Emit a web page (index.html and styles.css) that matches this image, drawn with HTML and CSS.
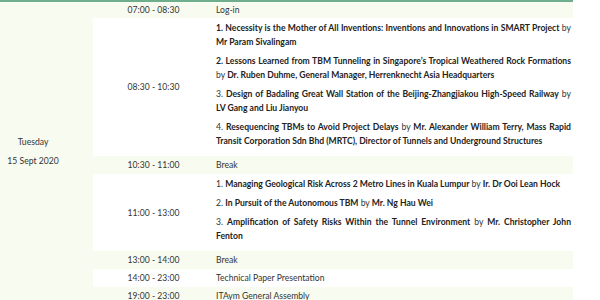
FILE: index.html
```html
<!DOCTYPE html>
<html>
<head>
<meta charset="utf-8">
<link rel="stylesheet" href="styles.css">
</head>
<body>
<table class="agenda">
  <tbody>
    <tr class="shade first">
      <td class="day" rowspan="7">
        <p>Tuesday</p>
        <p>15 Sept 2020</p>
      </td>
      <td class="time">07:00 - 08:30</td>
      <td class="desc single">Log-in</td>
    </tr>
    <tr>
      <td class="time">08:30 - 10:30</td>
      <td class="desc">
        <p><b>1. Necessity is the Mother of All Inventions: Inventions and Innovations in SMART Project</b> by <b>Mr Param Sivalingam</b></p>
        <p><b>2. Lessons Learned from TBM Tunneling in Singapore’s Tropical Weathered Rock Formations</b> by <b>Dr. Ruben Duhme, General Manager, Herrenknecht Asia Headquarters</b></p>
        <p>3. <b>Design of Badaling Great Wall Station of the Beijing-Zhangjiakou High-Speed Railway</b> by <b>LV Gang and Liu Jianyou</b></p>
        <p>4. <b>Resequencing TBMs to Avoid Project Delays</b> by <b>Mr. Alexander William Terry, Mass Rapid Transit Corporation Sdn Bhd (MRTC), Director of Tunnels and Underground Structures</b></p>
      </td>
    </tr>
    <tr class="shade">
      <td class="time">10:30 - 11:00</td>
      <td class="desc single">Break</td>
    </tr>
    <tr>
      <td class="time">11:00 - 13:00</td>
      <td class="desc">
        <p>1. <b>Managing Geological Risk Across 2 Metro Lines in Kuala Lumpur</b> by <b>Ir. Dr Ooi Lean Hock</b></p>
        <p>2. <b>In Pursuit of the Autonomous TBM</b> by <b>Mr. Ng Hau Wei</b></p>
        <p>3. <b>Amplification of Safety Risks Within the Tunnel Environment</b> by <b>Mr. Christopher John Fenton</b></p>
      </td>
    </tr>
    <tr class="shade">
      <td class="time">13:00 - 14:00</td>
      <td class="desc single">Break</td>
    </tr>
    <tr>
      <td class="time">14:00 - 23:00</td>
      <td class="desc single">Technical Paper Presentation</td>
    </tr>
    <tr class="shade">
      <td class="time">19:00 - 23:00</td>
      <td class="desc single">ITAym General Assembly</td>
    </tr>
  </tbody>
</table>
</body>
</html>
```

FILE: styles.css
```css
html, body {
  margin: 0;
  padding: 0;
  background: #ffffff;
}

body {
  font-family: Lato, "Open Sans", sans-serif;
  font-size: 8.6px;
  line-height: 14px;
  color: #333333;
}

.agenda {
  width: 573px;
  border-collapse: collapse;
  border-top: 2px solid #6fae8c;
  table-layout: fixed;
}

.agenda td {
  padding: 0;
  vertical-align: middle;
}

.agenda b {
  font-weight: 700;
  color: #222222;
}

.shade td {
  background: #f7fbf0;
}

.agenda td.day {
  width: 66px;
  padding-right: 27px;
  text-align: center;
  background: #f7fbf0;
}

.day p {
  margin: 0 0 5px;
}

.agenda td.time {
  width: 121px;
  text-align: center;
}

.agenda td.desc {
  padding: 3px 2px 3px 2px;
  text-align: justify;
}

.agenda td.desc.single {
  padding: 2px 2px 2px 2px;
}

.first td.desc.single {
  padding: 1px 2px 1px 2px;
}

.desc p {
  margin: 0 0 5px;
}
```
